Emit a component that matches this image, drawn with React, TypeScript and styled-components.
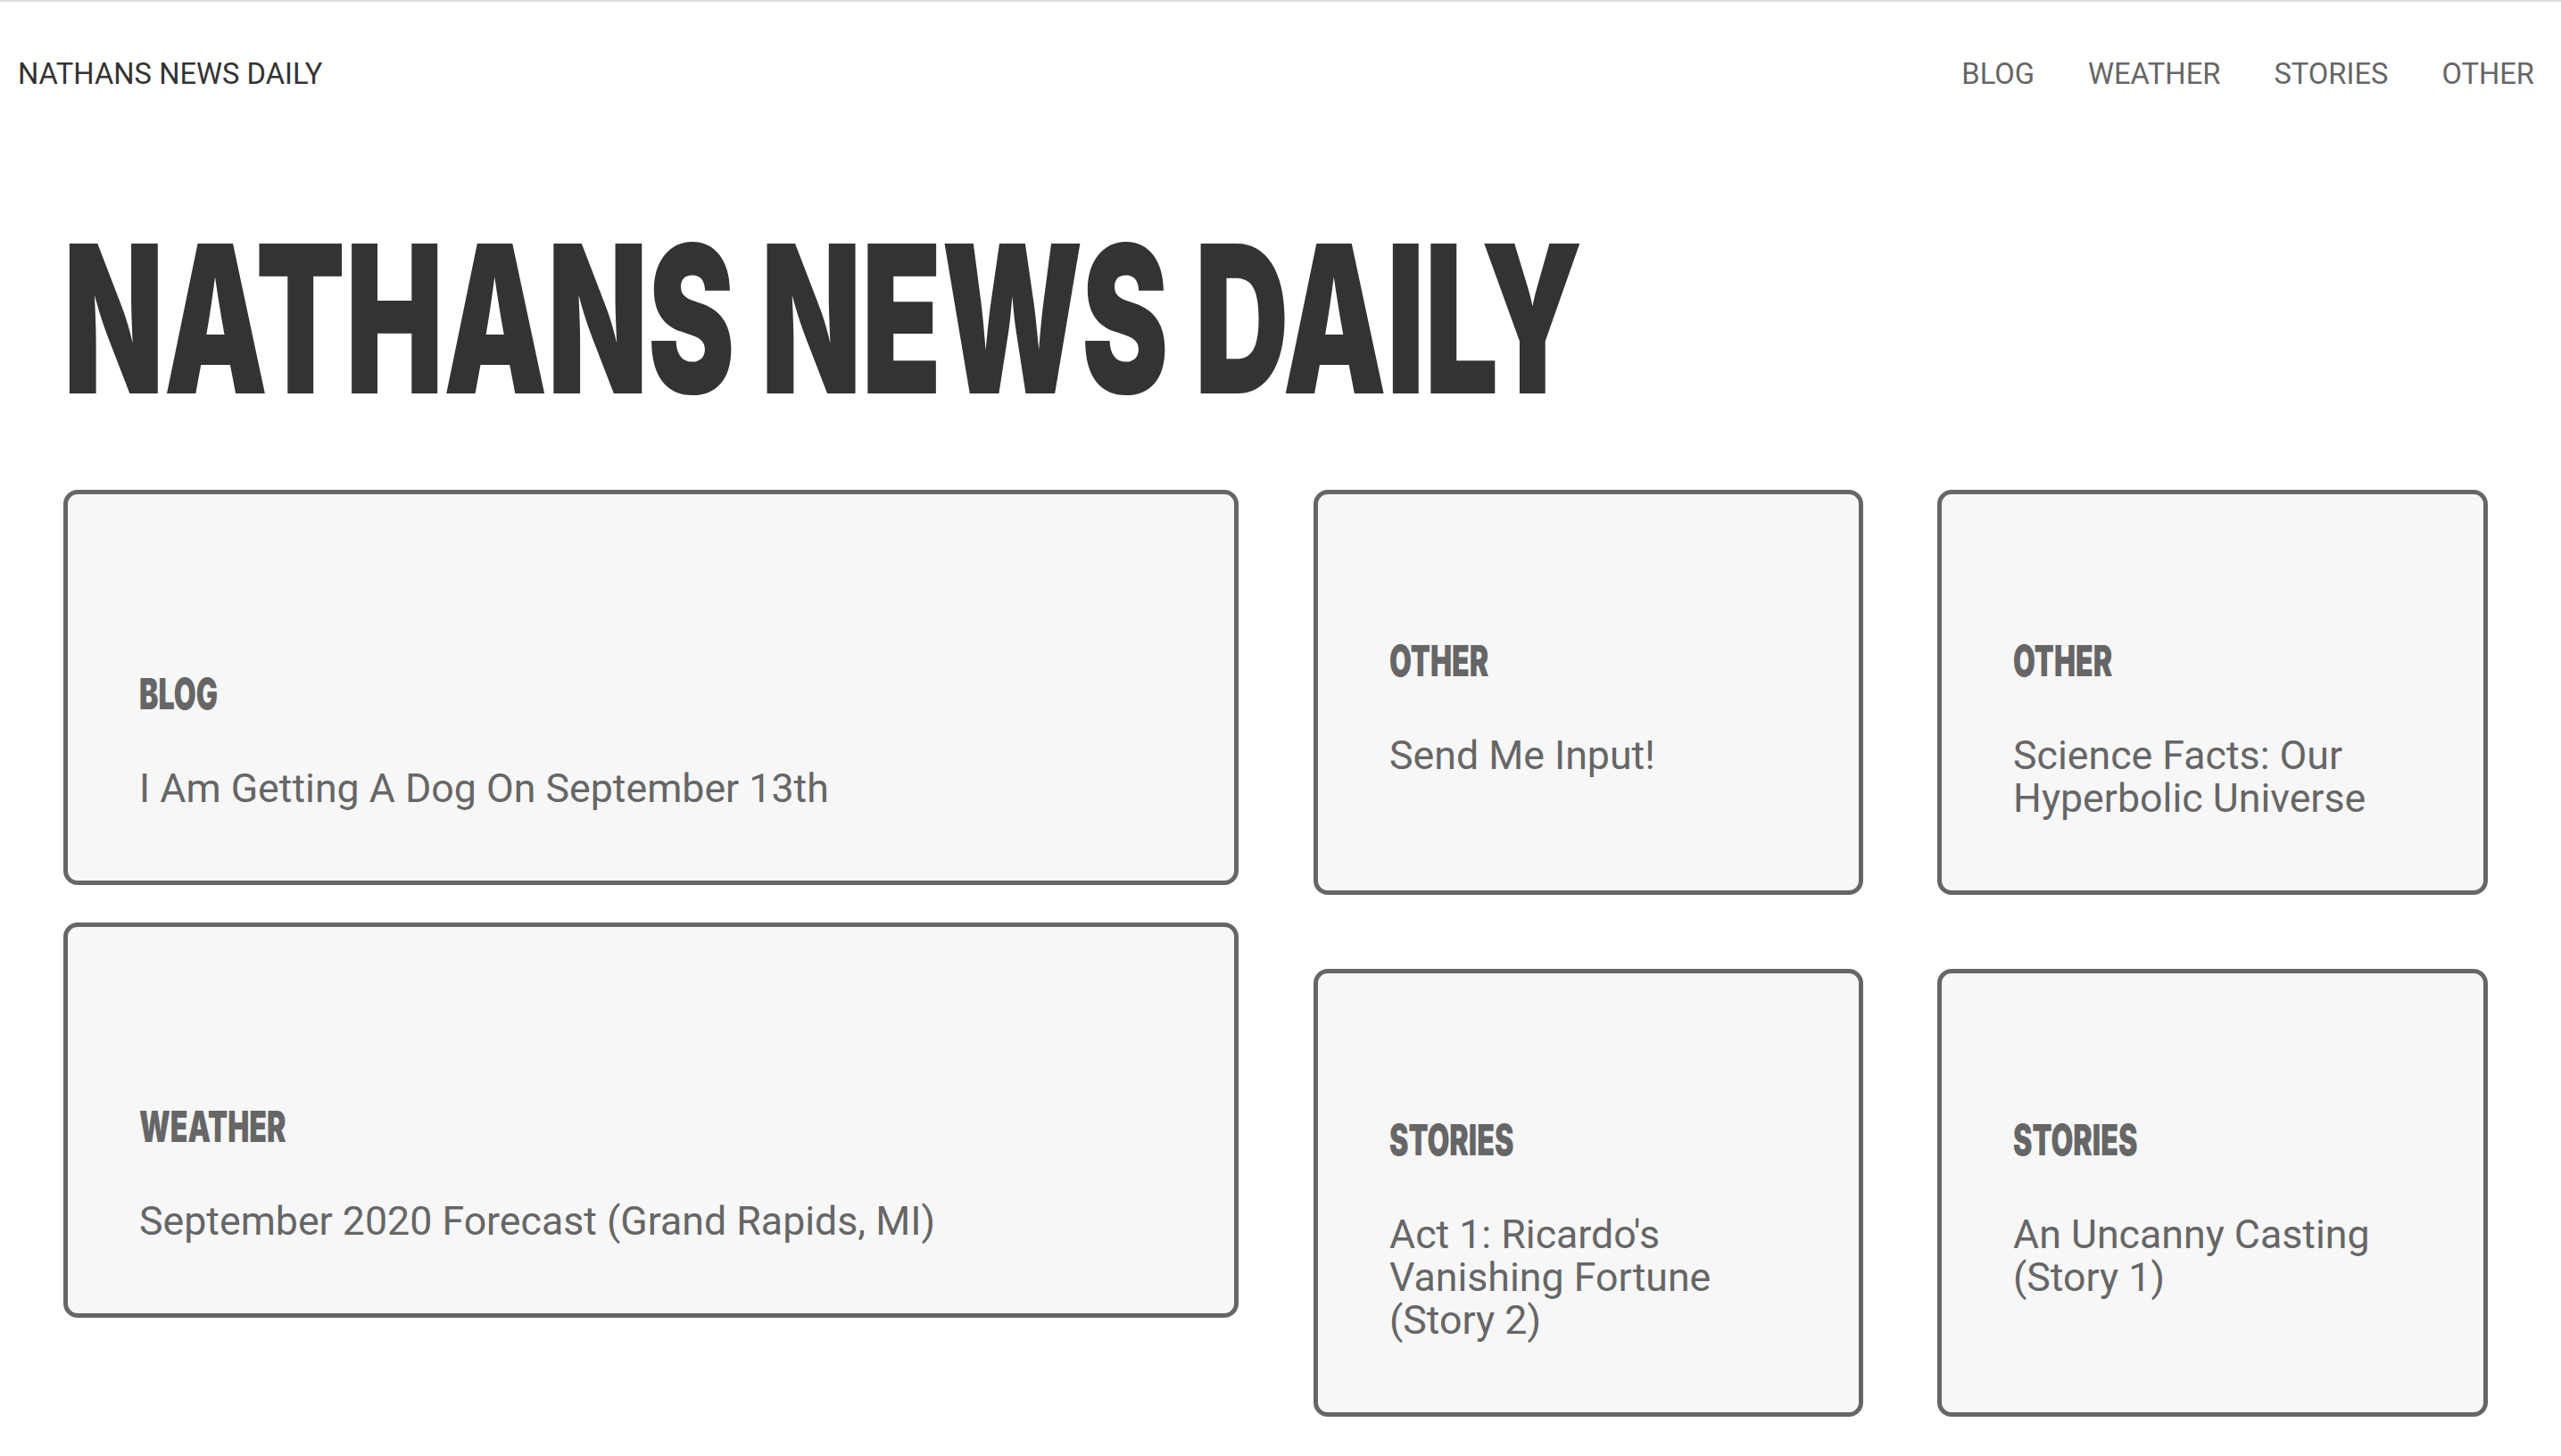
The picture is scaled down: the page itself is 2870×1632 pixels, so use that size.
import React from "react";
import styled, { createGlobalStyle } from "styled-components";

const GlobalStyle = createGlobalStyle`
  html, body {
    margin: 0;
    padding: 0;
    background: #ffffff;
    overflow-x: hidden;
  }
  * { box-sizing: border-box; }
`;

const Page = styled.div`
  min-height: 1632px;
  overflow: hidden;
  font-family: Roboto, "Liberation Sans", Arial, sans-serif;
`;

const TopBar = styled.header`
  display: flex;
  justify-content: space-between;
  align-items: center;
  height: 164px;
  border-top: 2px solid #dcdce0;
  padding: 0 30px 0 20px;
`;

const Brand = styled.a`
  font-family: Roboto, "Liberation Sans", Arial, sans-serif;
  font-size: 32.7px;
  line-height: 1;
  color: #333333;
  text-decoration: none;
`;

const Nav = styled.nav`
  display: flex;
  gap: 60px;
`;

const NavLink = styled.a`
  font-family: Roboto, "Liberation Sans", Arial, sans-serif;
  font-size: 32.7px;
  line-height: 1;
  color: #666666;
  text-decoration: none;
`;

const Main = styled.main`
  padding-left: 71px;
`;

const Title = styled.h1`
  margin: 78px 0 0;
  font-family: Inter, "Noto Sans", sans-serif;
  font-weight: 900;
  font-size: 231px;
  line-height: 1;
  color: #333333;
  white-space: nowrap;
  transform: scaleX(0.634);
  transform-origin: left center;
`;

const Board = styled.section`
  display: flex;
  align-items: flex-start;
  gap: 84px;
  margin-top: 76px;
`;

const WideColumn = styled.div`
  display: flex;
  flex-direction: column;
  gap: 42px;
  width: 1317px;
`;

const Grid = styled.div`
  display: grid;
  grid-template-columns: 616px 617px;
  column-gap: 83px;
  row-gap: 83px;
`;

const Card = styled.article<{ $top: number }>`
  background: #f7f7f7;
  border: 5px solid #666666;
  border-radius: 16px;
  padding: ${(p) => p.$top}px 80px 79px;
`;

const Kind = styled.div`
  font-family: Inter, "Noto Sans", sans-serif;
  font-weight: 900;
  font-size: 48px;
  line-height: 1;
  color: #666666;
  white-space: nowrap;
  transform: scaleX(0.67);
  transform-origin: left center;
`;

const Headline = styled.p`
  margin: 58px 0 0;
  font-family: Roboto, "Liberation Sans", Arial, sans-serif;
  font-size: 44.7px;
  line-height: 48px;
  color: #666666;
`;

type Post = { kind: string; title: string };

const wide: Post[] = [
  { kind: "BLOG", title: "I Am Getting A Dog On September 13th" },
  { kind: "WEATHER", title: "September 2020 Forecast (Grand Rapids, MI)" },
];

const grid: Post[] = [
  { kind: "OTHER", title: "Send Me Input!" },
  { kind: "OTHER", title: "Science Facts: Our Hyperbolic Universe" },
  { kind: "STORIES", title: "Act 1: Ricardo's Vanishing Fortune (Story 2)" },
  { kind: "STORIES", title: "An Uncanny Casting (Story 1)" },
];

const PostCard = ({ post, top }: { post: Post; top: number }) => (
  <Card $top={top}>
    <Kind>{post.kind}</Kind>
    <Headline>{post.title}</Headline>
  </Card>
);

export default function App() {
  return (
    <Page>
      <GlobalStyle />
      <TopBar>
        <Brand href="#">NATHANS NEWS DAILY</Brand>
        <Nav>
          <NavLink href="#">BLOG</NavLink>
          <NavLink href="#">WEATHER</NavLink>
          <NavLink href="#">STORIES</NavLink>
          <NavLink href="#">OTHER</NavLink>
        </Nav>
      </TopBar>
      <Main>
        <Title>NATHANS NEWS DAILY</Title>
        <Board>
          <WideColumn>
            {wide.map((p) => (
              <PostCard key={p.title} post={p} top={200} />
            ))}
          </WideColumn>
          <Grid>
            {grid.map((p) => (
              <PostCard key={p.title} post={p} top={163} />
            ))}
          </Grid>
        </Board>
      </Main>
    </Page>
  );
}
